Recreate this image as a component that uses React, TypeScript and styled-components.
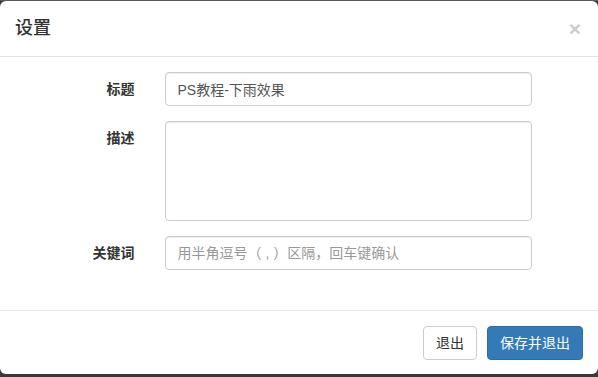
import React from "react";
import styled, { createGlobalStyle } from "styled-components";

const Global = createGlobalStyle`
  html, body { margin: 0; padding: 0; }
  body {
    background: #3f3f3f;
    font-family: "Liberation Sans", "Noto Sans CJK SC", sans-serif;
    font-size: 14px;
    color: #333;
  }
  * { box-sizing: border-box; }
`;

const Page = styled.div`
  width: 598px;
  height: 377px;
  padding-top: 1px;
  background: linear-gradient(#5a5a5a 0 1px, #3a3a3a 1px);
`;

const Modal = styled.div`
  width: 598px;
  height: 373px;
  background: #fff;
  border-radius: 6px;
  display: flex;
  flex-direction: column;
  overflow: hidden;
`;

const Header = styled.div`
  display: flex;
  align-items: center;
  justify-content: space-between;
  padding: 15px;
  height: 56px;
  border-bottom: 1px solid #e5e5e5;
`;

const Title = styled.h4`
  margin: 0;
  font-size: 18px;
  font-weight: 500;
  line-height: 25px;
  color: #333;
`;

const Close = styled.button`
  border: 0;
  background: transparent;
  padding: 0;
  margin-right: 2px;
  font-family: "Liberation Sans", sans-serif;
  font-size: 21px;
  font-weight: bold;
  line-height: 1;
  color: #000;
  opacity: 0.2;
  cursor: pointer;
`;

const Body = styled.div`
  padding: 15px 0 25px;
  flex: 1;
`;

const Row = styled.div`
  display: grid;
  grid-template-columns: 134.5px 367px;
  column-gap: 30px;
  margin-bottom: 15px;
  align-items: start;
`;

const Label = styled.label`
  text-align: right;
  font-weight: bold;
  padding-top: 7px;
  line-height: 20px;
  font-size: 14px;
  color: #333;
`;

const Input = styled.input`
  height: 34px;
  width: 100%;
  padding: 6px 12px;
  font-size: 14px;
  line-height: 20px;
  color: #555;
  border: 1px solid #ccc;
  border-radius: 4px;
  font-family: inherit;
  box-shadow: inset 0 1px 1px rgba(0,0,0,.075);
  &::placeholder { color: #999; }
`;

const TextArea = styled.textarea`
  height: 100px;
  width: 100%;
  padding: 6px 12px;
  font-size: 14px;
  color: #555;
  border: 1px solid #ccc;
  border-radius: 4px;
  font-family: inherit;
  resize: none;
  display: block;
  box-shadow: inset 0 1px 1px rgba(0,0,0,.075);
`;

const Footer = styled.div`
  display: flex;
  justify-content: flex-end;
  gap: 10px;
  padding: 15px;
  border-top: 1px solid #e5e5e5;
`;

const Button = styled.button<{ $primary?: boolean }>`
  height: 34px;
  padding: 6px 12px;
  font-size: 14px;
  line-height: 20px;
  font-family: inherit;
  border-radius: 4px;
  border: 1px solid ${(p) => (p.$primary ? "#2e6da4" : "#ccc")};
  background: ${(p) => (p.$primary ? "#337ab7" : "#fff")};
  color: ${(p) => (p.$primary ? "#fff" : "#333")};
  cursor: pointer;
`;

export default function App() {
  return (
    <>
      <Global />
      <Page>
        <Modal>
          <Header>
            <Title>设置</Title>
            <Close aria-label="close">×</Close>
          </Header>
          <Body>
            <Row>
              <Label>标题</Label>
              <Input defaultValue="PS教程-下雨效果" />
            </Row>
            <Row>
              <Label>描述</Label>
              <TextArea />
            </Row>
            <Row>
              <Label>关键词</Label>
              <Input placeholder="用半角逗号（ , ）区隔，回车键确认" />
            </Row>
          </Body>
          <Footer>
            <Button>退出</Button>
            <Button $primary>保存并退出</Button>
          </Footer>
        </Modal>
      </Page>
    </>
  );
}
